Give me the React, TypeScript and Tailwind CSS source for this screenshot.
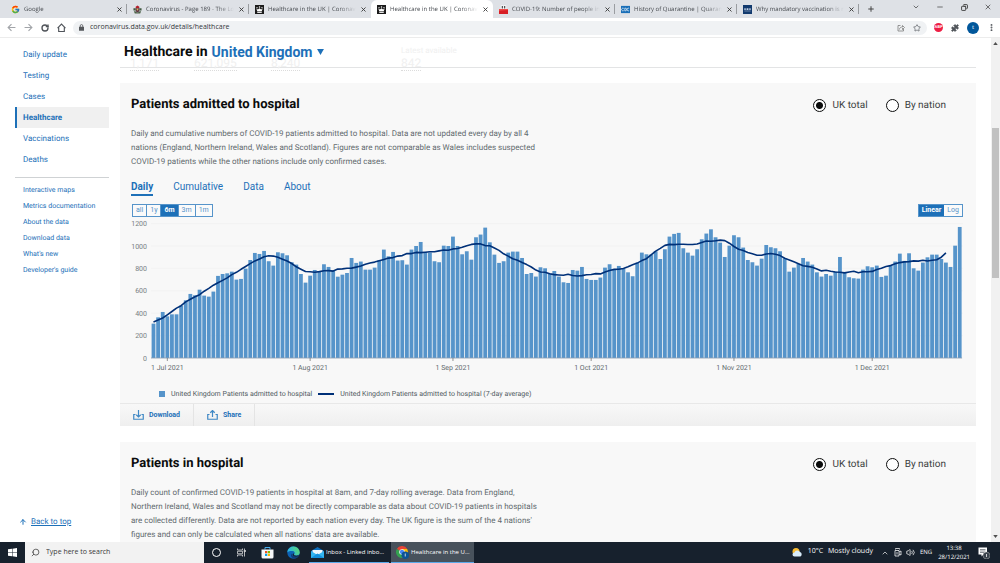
import type { ReactNode } from "react";
import { ArrowUp, ChevronDown, ChevronUp, Copy, Minus, MoreVertical, Plus, Puzzle, RotateCw, Search, Star, Volume2, X } from "lucide-react";
import { FcGoogle } from "react-icons/fc";

const ADMISSIONS = [
  307, 363, 411, 372, 390, 390, 468, 515, 572, 560, 610, 557, 548, 593, 733, 750, 756, 771, 700, 706, 798, 875,
  938, 929, 956, 864, 825, 944, 935, 917, 855, 834, 750, 673, 735, 786, 771, 837, 813, 783, 726, 744, 759, 893,
  849, 861, 789, 789, 807, 872, 968, 908, 947, 870, 873, 834, 968, 1000, 1036, 947, 941, 864, 855, 1003, 1000,
  1084, 1000, 926, 953, 878, 1078, 1102, 1164, 1033, 923, 849, 864, 941, 950, 950, 893, 750, 759, 727, 810, 801,
  753, 777, 727, 676, 670, 786, 780, 813, 706, 697, 697, 718, 807, 837, 795, 822, 795, 765, 730, 849, 941, 926,
  923, 953, 884, 971, 1084, 1108, 1117, 980, 941, 914, 971, 1060, 1111, 1149, 1078, 1030, 902, 1003, 1096, 1078,
  986, 875, 855, 825, 887, 1009, 989, 980, 953, 890, 771, 807, 840, 893, 861, 834, 765, 727, 750, 735, 771, 902,
  768, 721, 712, 709, 789, 819, 810, 825, 724, 735, 831, 861, 932, 867, 935, 801, 780, 852, 899, 923, 923, 884,
  852, 813, 1003, 1170,
];

// the three days before the visible range, needed for the centred average
const LEAD_IN = [267, 267, 267];

const MONTHS = [
  { label: "1 Jul 2021", day: 3 },
  { label: "1 Aug 2021", day: 34 },
  { label: "1 Sep 2021", day: 65 },
  { label: "1 Oct 2021", day: 95 },
  { label: "1 Nov 2021", day: 126 },
  { label: "1 Dec 2021", day: 156 },
];

const TABS = [
  { title: "Google", icon: "google" },
  { title: "Coronavirus - Page 189 - The Lo", icon: "crest" },
  { title: "Healthcare in the UK | Coronavi", icon: "gov" },
  { title: "Healthcare in the UK | Coronavi", icon: "gov", active: true },
  { title: "COVID-19: Number of people in", icon: "sky" },
  { title: "History of Quarantine | Quaranti", icon: "cdc" },
  { title: "Why mandatory vaccination is n", icon: "jstor" },
];

const NAV = ["Daily update", "Testing", "Cases", "Healthcare", "Vaccinations", "Deaths"];
const LINKS = ["Interactive maps", "Metrics documentation", "About the data", "Download data", "What's new", "Developer's guide"];

function Crown({ className }: { className?: string }) {
  return (
    <svg viewBox="0 0 20 20" className={className}>
      <rect width="20" height="20" fill="#1b1b1b" />
      <path d="M3 8l3.500 2L10 7l3.500 3L17 8l-2 6H5z" fill="#fff" />
      <circle cx="10" cy="4.5" r="1.7" fill="#fff" />
      <circle cx="4.500" cy="6" r="1.4" fill="#fff" />
      <circle cx="15.500" cy="6" r="1.4" fill="#fff" />
      <rect x="5" y="15" width="10" height="2.500" fill="#fff" />
    </svg>
  );
}

function TabIcon({ name }: { name: string }) {
  const size = "h-[9px] w-[9px] shrink-0";
  if (name === "google") return <FcGoogle className={size} />;
  if (name === "gov") return <Crown className={size} />;
  if (name === "crest")
    return (
      <svg viewBox="0 0 20 20" className={size}>
        <path d="M6 4l4-3 4 3v3H6z" fill="#b3202c" />
        <path d="M1 7h5v5H1zM14 7h5v5h-5z" fill="#3f5940" />
        <path d="M6 7h8v7l-4 3-4-3z" fill="#5b3444" />
        <path d="M2 14h3l5 3 5-3h3l-2 5H4z" fill="#4d6248" />
        <circle cx="10" cy="10" r="2" fill="#dfb25a" />
      </svg>
    );
  if (name === "sky")
    return (
      <svg viewBox="0 0 20 20" className={size}>
        <path d="M4 1h12v9H4z" fill="#fff" />
        <path d="M6 2h3v6H6zM11 2h3v6h-3z" fill="#555" />
        <rect y="9" width="20" height="11" fill="#d81f26" />
        <path d="M0 9h20v2L0 13z" fill="#ee4b48" />
      </svg>
    );
  if (name === "cdc")
    return (
      <svg viewBox="0 0 20 20" className={size}>
        <rect y="2" width="20" height="16" fill="#1a6fb8" />
        <path d="M6 7.500a3 3 0 1 0 0 5M8.500 7v6h1a3 3 0 0 0 0-6zM18 7.500a3 3 0 1 0 0 5" fill="none" stroke="#fff" strokeWidth="1.5" />
      </svg>
    );
  return (
    <svg viewBox="0 0 20 20" className={size}>
      <rect width="20" height="20" fill="#123a6e" />
      <path d="M3 7h3v4H3zM8 7h4v4H8zM14 7h3v4h-3zM3 13h14v1H3z" fill="#c6d4e6" />
    </svg>
  );
}

function BrowserTabs() {
  return (
    <div className="flex h-[18px] items-stretch bg-[#dee1e6] pl-[5px] text-[6px] text-[#45494e]">
      {TABS.map((tab, i) => (
        <div
          key={i}
          className={
            tab.active
              ? "flex max-w-[122px] flex-1 items-center gap-1 rounded-t-md bg-white pl-[6px] pr-1"
              : "relative flex max-w-[122px] flex-1 items-center gap-1 pl-[6px] pr-1"
          }
        >
          <TabIcon name={tab.icon} />
          <span className="min-w-0 flex-1 whitespace-nowrap [mask-image:linear-gradient(to_right,black_80%,transparent)]">
            {tab.title}
          </span>
          <button aria-label="Close tab">
            <X className="h-[7px] w-[7px] text-[#333]" strokeWidth={3} />
          </button>
          {!tab.active && i !== 2 && <i className="absolute right-0 top-1 h-[10px] w-px bg-[#9a9da1]" />}
        </div>
      ))}
      <button aria-label="New tab" className="px-2">
        <Plus className="h-2 w-2 text-[#444]" strokeWidth={3} />
      </button>
      <div className="ml-auto flex shrink-0 pb-1 text-[#333]">
        <button aria-label="Search tabs" className="flex w-6 items-center justify-center"><ChevronDown className="h-2 w-2" /></button>
        <button aria-label="Minimise" className="flex w-6 items-center justify-center"><Minus className="h-2 w-2" /></button>
        <button aria-label="Restore" className="flex w-6 items-center justify-center"><Copy className="h-[7px] w-[7px] -scale-x-100" strokeWidth={3} /></button>
        <button aria-label="Close" className="flex w-6 items-center justify-center"><X className="h-2 w-2" /></button>
      </div>
    </div>
  );
}

function Toolbar() {
  return (
    <div className="flex h-[19px] items-center bg-white pl-[7px] text-[#50545a]">
      <div className="flex w-[66px] items-center gap-2">
        <button aria-label="Back">
          <svg viewBox="0 0 16 16" className="h-[9px] w-[9px]" fill="none" stroke="#a2a5a9" strokeWidth="2"><path d="M15 8H2M8 2L2 8l6 6" /></svg>
        </button>
        <button aria-label="Forward">
          <svg viewBox="0 0 16 16" className="h-[9px] w-[9px]" fill="none" stroke="#a2a5a9" strokeWidth="2"><path d="M1 8h13M8 2l6 6-6 6" /></svg>
        </button>
        <button aria-label="Reload"><RotateCw className="h-2 w-2" strokeWidth={4} /></button>
        <button aria-label="Home">
          <svg viewBox="0 0 16 16" className="h-[9px] w-[9px]" fill="none" stroke="#50545a" strokeWidth="2"><path d="M1 9l7-7 7 7M3 8v7h10V8" /></svg>
        </button>
      </div>
      <div className="flex h-[14px] flex-1 items-center rounded-full bg-[#f0f2f4] pl-[6px] pr-[6px]">
        <svg viewBox="0 0 12 16" className="h-[7px] w-[5px]"><rect y="6" width="12" height="10" rx="1" fill="#55585c" /><path d="M3 7V4a3 3 0 0 1 6 0v3" fill="none" stroke="#55585c" strokeWidth="2" /></svg>
        <input
          aria-label="Address"
          readOnly
          value="coronavirus.data.gov.uk/details/healthcare"
          className="ml-[6px] min-w-0 flex-1 bg-transparent text-[7px] text-[#34373b] outline-none"
        />
        <button aria-label="Share page">
          <svg viewBox="0 0 16 16" className="mr-2 h-2 w-2" fill="none" stroke="#777" strokeWidth="1.5"><path d="M7 3H2v11h11v-4M5 11c0-4 3-5 6-5V3l4 4-4 4V8" /></svg>
        </button>
        <button aria-label="Bookmark"><Star className="h-2 w-2" strokeWidth={2} /></button>
      </div>
      <div className="flex w-[73px] items-center gap-2 pl-[7px]">
        <span className="flex h-[9px] w-[9px] items-center justify-center rounded-full bg-[#ee1f45] text-[4px] font-bold text-white">ABP</span>
        <button aria-label="Extensions"><Puzzle className="h-2 w-2" fill="#50545a" /></button>
        <button className="flex h-3 w-3 items-center justify-center rounded-full bg-[#01579b] text-[6px] text-white">t</button>
        <button aria-label="Menu"><MoreVertical className="h-[9px] w-[9px]" strokeWidth={3} /></button>
      </div>
    </div>
  );
}

function Sidebar() {
  return (
    <aside className="flex w-[109px] shrink-0 flex-col pb-[14px] pl-[15px] pt-[6px] text-[#1d70b8]">
      <nav className="flex flex-col border-b border-[#cfd2d4] pb-[7px] text-[8px]">
        {NAV.map((item) => (
          <a
            key={item}
            href="#"
            className={
              item === "Healthcare"
                ? "flex h-[21px] items-center border-l-2 border-[#1d70b8] bg-[#f0f0f0] pl-[6px] font-bold"
                : "flex h-[21px] items-center pl-2"
            }
          >
            {item}
          </a>
        ))}
      </nav>
      <nav className="flex flex-col pt-1 text-[7px]">
        {LINKS.map((item) => (
          <a key={item} href="#" className="flex h-4 items-center pl-2">{item}</a>
        ))}
      </nav>
      <a href="#top" className="mt-auto flex items-center gap-1 pl-1 text-[8px] underline">
        <ArrowUp className="h-[10px] w-2" strokeWidth={3} />
        Back to top
      </a>
    </aside>
  );
}

function Radio({ name, label, checked }: { name: string; label: string; checked?: boolean }) {
  return (
    <label className="flex items-center gap-[6px] text-[10px] text-[#3b3e40]">
      <input
        type="radio"
        name={name}
        defaultChecked={checked}
        className="h-[13px] w-[13px] appearance-none rounded-full border-[1px] border-[#0b0c0c] bg-white checked:bg-[radial-gradient(#0b0c0c_0_3px,transparent_4px)]"
      />
      {label}
    </label>
  );
}

function CardHead({ title, name, lines }: { title: string; name: string; lines: string[] }) {
  return (
    <>
      <div className="flex items-center justify-between pr-[30px]">
        <h2 className="text-[13px] font-bold leading-4 text-[#0b0c0c]">{title}</h2>
        <div className="flex gap-[18px]">
          <Radio name={name} label="UK total" checked />
          <Radio name={name} label="By nation" />
        </div>
      </div>
      <p className="mt-[14px] text-[8px] leading-[14px] text-[#626a6e]">
        {lines.map((line) => (
          <span key={line} className="block">{line}</span>
        ))}
      </p>
    </>
  );
}

function Chart() {
  const baseline = 139;
  const y = (v: number) => baseline - v * 0.112;
  const x = (day: number) => 33.5 + day * 4.607;
  const series = [...LEAD_IN, ...ADMISSIONS];
  const points = series
    .slice(0, series.length - 6)
    .map((_, i) => {
      const mean = series.slice(i, i + 7).reduce((a, b) => a + b, 0) / 7;
      return `${x(i).toFixed(1)},${y(mean).toFixed(1)}`;
    })
    .join(" ");

  return (
    <svg viewBox="0 0 856 163" className="block w-full" role="img" aria-label="Patients admitted to hospital">
      {[0, 200, 400, 600, 800, 1000, 1200].map((v) => (
        <g key={v}>
          <line x1="31" x2="843" y1={y(v)} y2={y(v)} stroke="#eeeeee" strokeWidth="0.6" />
          <text x="27" y={y(v) + 2.5} textAnchor="end" fontSize="7" fill="#777d81">{v}</text>
        </g>
      ))}
      {ADMISSIONS.map((v, i) => (
        <rect key={i} x={x(i) - 1.9} y={y(v)} width="3.8" height={v * 0.112} fill="#5694ca" />
      ))}
      <line x1="31" x2="842" y1={baseline} y2={baseline} stroke="#8aa0b4" strokeWidth="0.8" />
      {MONTHS.map((m) => (
        <g key={m.label}>
          <line x1={x(m.day)} x2={x(m.day)} y1={baseline} y2={baseline + 3} stroke="#666" strokeWidth="0.7" />
          <text x={x(m.day)} y={baseline + 12} textAnchor="middle" fontSize="7" fill="#626a6e">{m.label}</text>
        </g>
      ))}
      <polyline points={points} fill="none" stroke="#003078" strokeWidth="1.6" strokeLinejoin="round" />
    </svg>
  );
}

function ActionButton({ label, children }: { label: string; children: ReactNode }) {
  return (
    <button className="flex items-center gap-[5px] border-r border-[#e4e4e4] px-[13px] text-[7px] font-bold text-[#1d70b8]">
      <svg viewBox="0 0 22 20" className="h-[10px] w-[11px]" fill="none" stroke="#3f88c5" strokeWidth="2.4">
        <path d="M5 9H1.500v9.500h19V9H17" />
        {children}
      </svg>
      {label}
    </button>
  );
}

function AdmissionsCard() {
  return (
    <section className="bg-[#f8f8f8]">
      <div className="pl-[11px] pt-[14px]">
        <CardHead
          title="Patients admitted to hospital"
          name="admitted"
          lines={[
            "Daily and cumulative numbers of COVID-19 patients admitted to hospital. Data are not updated every day by all 4",
            "nations (England, Northern Ireland, Wales and Scotland). Figures are not comparable as Wales includes suspected",
            "COVID-19 patients while the other nations include only confirmed cases.",
          ]}
        />
        <div className="mt-[11px] flex gap-5 text-[10px] leading-[14px] text-[#1d70b8]">
          <button className="border-b-2 border-[#1d70b8] font-bold">Daily</button>
          <button className="border-b-2 border-transparent">Cumulative</button>
          <button className="border-b-2 border-transparent">Data</button>
          <button className="border-b-2 border-transparent">About</button>
        </div>
        <div className="mt-2 flex justify-between pl-px pr-[13px] text-[7px] leading-[11px] text-[#5694ca]">
          <div className="flex divide-x divide-[#5694ca] border border-[#5694ca] bg-[#fafafa]">
            <button className="px-[3px]">all</button>
            <button className="px-[3px]">1y</button>
            <button className="bg-[#1d70b8] px-[3px] font-bold text-white">6m</button>
            <button className="px-[3px]">3m</button>
            <button className="px-[3px]">1m</button>
          </div>
          <div className="flex border border-[#5694ca] bg-[#fafafa]">
            <button className="bg-[#1d70b8] px-[3px] font-bold text-white">Linear</button>
            <button className="px-[3px]">Log</button>
          </div>
        </div>
      </div>
      <div className="pt-[2px]">
        <Chart />
      </div>
      <div className="flex h-[21px] items-center gap-[6px] pl-[39px] pt-[3px] text-[7px] text-[#505a5f]">
        <i className="h-[6px] w-[6px] bg-[#5694ca]" />
        <span>United Kingdom Patients admitted to hospital</span>
        <i className="h-[2px] w-4 bg-[#003078]" />
        <span>United Kingdom Patients admitted to hospital (7-day average)</span>
      </div>
      <div className="flex h-[23px] border-t border-[#e8e8e8] bg-gradient-to-b from-[#f8f8f8] to-[#efefef]">
        <ActionButton label="Download"><path d="M11 0v14M6.500 9.500L11 14l4.500-4.500" /></ActionButton>
        <ActionButton label="Share"><path d="M11 14V1M6.500 5.500L11 1l4.500 4.500" /></ActionButton>
      </div>
    </section>
  );
}

function Taskbar() {
  return (
    <footer className="flex h-[21px] shrink-0 items-stretch bg-[#17212d] font-['Open_Sans','Noto_Sans',sans-serif] text-[6px] text-white">
      <button aria-label="Start" className="flex w-[25px] items-center justify-center">
        <svg viewBox="0 0 18 18" className="h-[9px] w-[9px]" fill="#fff"><path d="M0 2.500l8-1V8.500H0zM9 1.300L18 0v8.500H9zM0 9.500h8v7l-8-1zM9 9.500h9V18l-9-1.300z" /></svg>
      </button>
      <label className="flex w-[179px] items-center gap-[6px] bg-[#f2f2f2] pl-[6px] text-[#3a3a3a]">
        <Search className="h-[9px] w-[9px] -scale-x-100" />
        <input placeholder="Type here to search" className="min-w-0 flex-1 bg-transparent text-[7px] outline-none placeholder:text-[#3a3a3a]" />
      </label>
      <div className="flex items-center">
        <button aria-label="Cortana" className="flex w-[25px] justify-center"><i className="h-[9px] w-[9px] rounded-full border-[1px] border-white" /></button>
        <button aria-label="Task view" className="flex w-[25px] justify-center">
          <svg viewBox="0 0 18 18" className="h-[9px] w-[9px]" fill="none" stroke="#ddd" strokeWidth="1.600"><path d="M1 1v3h10V1M1 17v-3h10v3M1 6.500h10v5H1zM15 1v3M15 8v9" /><path d="M14 5h3v2h-3z" fill="#fff" /></svg>
        </button>
        <button aria-label="Store" className="flex w-[27px] justify-center">
          <svg viewBox="0 0 26 26" className="h-[13px] w-[13px]">
            <path d="M8 7V3h10v4" fill="none" stroke="#4ab0ee" strokeWidth="2" />
            <path d="M1 7h24v15a3 3 0 0 1-3 3H4a3 3 0 0 1-3-3z" fill="#f5f7f9" />
            <path d="M8 10h4.500v4.500H8z" fill="#f25022" /><path d="M13.500 10H18v4.500h-4.500z" fill="#7fba00" />
            <path d="M8 15.500h4.500V20H8z" fill="#00a4ef" /><path d="M13.500 15.500H18V20h-4.500z" fill="#ffb900" />
          </svg>
        </button>
        <button aria-label="Edge" className="flex w-[25px] justify-center">
          <svg viewBox="0 0 26 26" className="h-[13px] w-[13px]">
            <defs><linearGradient id="edge" x1="0" x2="1" y1="0.300" y2="0"><stop offset="0" stopColor="#2bb5e8" /><stop offset="1" stopColor="#5fdb65" /></linearGradient></defs>
            <circle cx="13" cy="13" r="12.500" fill="#0c62b5" />
            <path d="M.6 12A12.500 12.500 0 0 1 25.500 13c0 4-3 6-7 6-3 0-5-1-4-3 2-2 1-6-4-6-5 0-8 1-9.900 2z" fill="url(#edge)" />
            <path d="M9 15c0 5 6 8 14 5a12.500 12.500 0 0 1-9 5.500C9 24 6 18 9 15z" fill="#123c78" />
            <path d="M14 14.500c1 1-1 2 0 3.500s7 2 9.500 0l-1 2.500c-5 2-12 0-11.500-4z" fill="#17212d" />
          </svg>
        </button>
      </div>
      <button className="ml-[3px] flex w-20 items-center gap-[2px] whitespace-nowrap border-b border-[#5ba9ea] pl-[2px]">
        <svg viewBox="0 0 26 22" className="h-[11px] w-[13px] shrink-0">
          <path d="M0 8L13 0l13 8v14H0z" fill="#0c6dbb" /><path d="M3 6h20v9H3z" fill="#eef6fc" />
          <path d="M0 8l13 8 13-8v14H0z" fill="#33b4f0" /><path d="M0 22l13-9 13 9z" fill="#1590dd" />
        </svg>
        Inbox - Linked inbo...
      </button>
      <button className="ml-[2px] flex w-[83px] items-center gap-[2px] whitespace-nowrap border-b border-[#5ba9ea] bg-[#48525c] pl-[5px]">
        <svg viewBox="0 0 26 26" className="h-[13px] w-[13px] shrink-0">
          <path d="M12 12L1.600 6a12 12 0 0 1 20.800 0z" fill="#e94335" />
          <path d="M12 12L1.600 6A12 12 0 0 0 12 24z" fill="#34a350" />
          <path d="M12 12v12A12 12 0 0 0 22.400 6H12z" fill="#fbbc05" />
          <circle cx="12" cy="12" r="5.500" fill="#fff" /><circle cx="12" cy="12" r="4.300" fill="#4285f4" />
          <circle cx="18.500" cy="18.500" r="7.500" fill="#0b5394" /><path d="M18.500 15v6" stroke="#fff" strokeWidth="1.500" />
        </svg>
        Healthcare in the U...
      </button>
      <div className="ml-auto flex items-center text-[7px]">
        <svg viewBox="0 0 22 18" className="h-[9px] w-[11px]">
          <circle cx="8" cy="7" r="7" fill="#f9bc33" />
          <path d="M5 17a4 4 0 0 1 0-8 6 6 0 0 1 11-1 5 5 0 0 1 1 9z" fill="#d9ecfa" />
        </svg>
        <span className="ml-[5px]">10°C</span>
        <span className="ml-[5px]">Mostly cloudy</span>
        <ChevronUp className="ml-2 h-2 w-2" />
        <svg viewBox="0 0 16 18" className="ml-[5px] h-[9px] w-2" fill="none" stroke="#fff" strokeWidth="1.500"><path d="M3 3V1h8v2M2 5h8v11H2zM10 8l4-2v8l-4-2M6 8v5" /></svg>
        <Volume2 className="ml-1 h-[9px] w-[9px]" />
        <span className="ml-[5px] text-[6px]">ENG</span>
        <span className="ml-[6px] text-center text-[6px] leading-[9px]">13:38<br />28/12/2021</span>
        <button aria-label="1 notification" className="ml-2 mr-[10px] h-3 w-3">
          <svg viewBox="0 0 24 24" className="h-3 w-3"><path d="M1 1h17v14h-7l-4 4v-4H1z" fill="#fff" /><path d="M4 5h11M4 8h11M4 11h8" stroke="#17212d" /><circle cx="17" cy="17" r="7" fill="#39424c" stroke="#bbb" /><path d="M17 14v6" stroke="#fff" strokeWidth="1.500" /></svg>
        </button>
      </div>
    </footer>
  );
}

export default function App() {
  return (
    <div className="flex h-screen flex-col overflow-hidden bg-white font-['Roboto','Inter',sans-serif] [text-rendering:geometricPrecision]">
      <header className="shrink-0 font-['Open_Sans','Noto_Sans',sans-serif]">
        <BrowserTabs />
        <Toolbar />
      </header>
      <div className="flex min-h-0 flex-1 border-t border-[#ececec]">
        <Sidebar />
        <main className="ml-[11px] min-w-0 flex-1 overflow-hidden">
          <div className="relative flex h-[30px] items-center border-b border-[#e3e4e5] pb-px pl-1">
            {/* scrolled figures showing faintly through the sticky title */}
            <div className="absolute inset-x-0 bottom-[-3px] flex items-end text-[12px] leading-[13px] text-[#f0f0f0]">
              <span className="ml-[10px] w-16"><span className="border-b border-dotted border-[#dcdcdc]">1,171</span></span>
              <span className="w-[77px]"><span className="border-b border-dotted border-[#dcdcdc]">621,095</span></span>
              <span className="w-[130px]"><span className="border-b border-dotted border-[#dcdcdc]">8,240</span></span>
              <span><span className="block text-[8px]">Latest available</span><span className="border-b border-dotted border-[#dcdcdc]">842</span></span>
            </div>
            <h1 className="relative flex items-center gap-1 text-[14px] font-bold text-[#0b0c0c]">
              Healthcare in
              <button className="flex items-center gap-[5px] text-[#1d70b8]">
                United Kingdom
                <svg viewBox="0 0 8 7" className="h-[6px] w-[7px]" fill="#1d70b8"><path d="M0 0h8L4 7z" /></svg>
              </button>
            </h1>
          </div>
          <div className="mt-[15px] flex flex-col gap-4">
            <AdmissionsCard />
            <section className="bg-[#f8f8f8] pb-4 pl-[11px] pt-[14px]">
              <CardHead
                title="Patients in hospital"
                name="inpatients"
                lines={[
                  "Daily count of confirmed COVID-19 patients in hospital at 8am, and 7-day rolling average. Data from England,",
                  "Northern Ireland, Wales and Scotland may not be directly comparable as data about COVID-19 patients in hospitals",
                  "are collected differently. Data are not reported by each nation every day. The UK figure is the sum of the 4 nations'",
                  "figures and can only be calculated when all nations' data are available.",
                ]}
              />
            </section>
          </div>
        </main>
        <div className="ml-[15px] flex w-[9px] shrink-0 flex-col items-center bg-[#f1f1f1] py-1">
          <svg viewBox="0 0 6 4" className="h-[3px] w-[5px]" fill="#505050"><path d="M3 0l3 4H0z" /></svg>
          <i className="mt-[83px] h-[150px] w-[7px] bg-[#c1c1c1]" />
          <svg viewBox="0 0 6 4" className="mt-auto h-[3px] w-[5px]" fill="#505050"><path d="M0 0h6L3 4z" /></svg>
        </div>
      </div>
      <Taskbar />
    </div>
  );
}
